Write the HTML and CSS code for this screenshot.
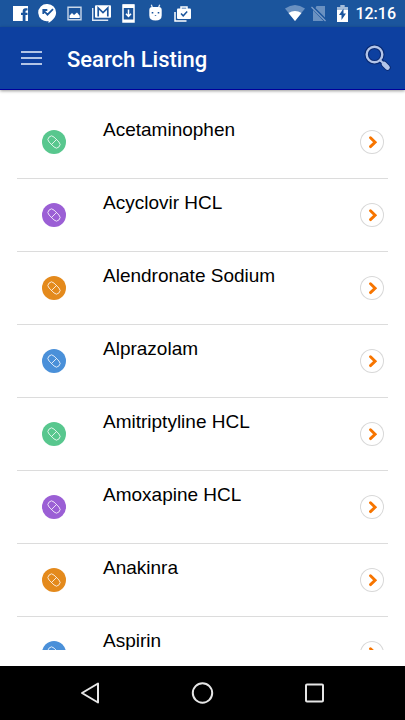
FILE: index.html
```html
<!DOCTYPE html>
<html lang="en">
<head>
<meta charset="utf-8">
<meta name="viewport" content="width=device-width, initial-scale=1">
<title>Search Listing</title>
<link rel="stylesheet" href="styles.css">
</head>
<body>
<svg class="symbols" aria-hidden="true">
  <symbol id="pill" viewBox="0 0 24 24">
    <g transform="rotate(45 12 12)" fill="none" stroke="currentColor" stroke-width=".9">
      <rect x="5" y="8.500" width="14" height="7" rx="3.500"/>
      <path d="M12 8.500v7"/>
    </g>
  </symbol>
  <symbol id="chevron" viewBox="0 0 24 24">
    <path d="M10.500 7.800l4.600 4.400-4.600 4.400" fill="none" stroke="currentColor" stroke-width="2.900" stroke-linecap="round" stroke-linejoin="miter"/>
  </symbol>
</svg>

<div class="status">
  <div class="notices" aria-hidden="true">
    <svg viewBox="0 0 27 27"><path fill="#fff" d="M6 6h15v15h-2.500v-6h2v-2.200h-2v-1.300q0-1 1-1h1V8.200h-2q-2.800 0-2.800 2.900v1.700h-1.700V15h1.700v6H6z"/></svg>
    <svg viewBox="0 0 27 27"><path fill="#fff" d="M13.500 4a8.600 8.600 0 0 1 8.600 8.600c0 4.500-3.600 8-7.600 10.400V21A8.600 8.600 0 1 1 13.500 4z"/><path d="M10 11l3.500 3.700 5.500-5.500M9.300 14v-4h4" fill="none" stroke="#1b559d" stroke-width="1.800"/></svg>
    <svg viewBox="0 0 27 27"><path d="M7 7.200h13v12.600H7z" fill="none" stroke="#c9d8ea" stroke-width="1.400"/><path fill="#fff" d="M8.500 18v-2.500l2.500-2.600 2 2 3-2.500 2.700 3.300V18z"/></svg>
    <svg viewBox="0 0 27 27"><path d="M4.700 8v12.300h15.500" fill="none" stroke="#dce6f2" stroke-width="1.400"/><rect x="7" y="5.200" width="16" height="12.600" rx="1" fill="#fff"/><path d="M10.200 16.500V8l4.800 4.500L19.800 8v8.500" fill="none" stroke="#1b559d" stroke-width="1.700"/></svg>
    <svg viewBox="0 0 27 27"><path d="M8 5h11v17H8z" fill="none" stroke="#fff" stroke-width="1.500"/><path fill="#fff" d="M8 4.500h11V8H8zM8 19.500h11V22H8z"/><path d="M13.500 9.500v6.500M11 13.800l2.500 2.700 2.500-2.700" fill="none" stroke="#fff" stroke-width="1.500"/></svg>
    <svg viewBox="0 0 27 27"><path d="M9.300 4.800l1.200 3M17.700 4.800l-1.200 3" stroke="#dce6f2" stroke-width="1.300"/><path fill="#fff" d="M7.300 10q0-3 3-3h6.400q3 0 3 3v5.500q0 5-6.200 5t-6.200-5z"/><path fill="#1b559d" d="M9.700 12h1.600v1.600H9.700zM15.700 12h1.600v1.600h-1.600zM12.800 15h1.400v.8h-1.400z"/></svg>
    <svg viewBox="0 0 27 27"><path d="M6 12v9h11.500" fill="none" stroke="#fff" stroke-width="1.500"/><path d="M12 9V7h6v2" fill="none" stroke="#fff" stroke-width="1.500"/><rect x="8" y="8.500" width="14" height="10.500" rx="1" fill="#fff"/><path d="M12 13.500l2.200 2.300 4-4.300" fill="none" stroke="#1b559d" stroke-width="1.500"/></svg>
  </div>
  <div class="system">
    <svg viewBox="0 0 24 27" aria-hidden="true"><path fill="#6a91c1" d="M2 8.500Q12 1.500 22 8.500L12 21z"/><path fill="#fff" d="M5.500 13q6.500-4 13 0L12 21z"/></svg>
    <svg viewBox="0 0 24 27" aria-hidden="true"><path fill="#6a91c1" d="M9.500 6H18v11.500L8.500 8zM6 10l10.500 11H6z"/><path d="M4.500 7l14 14" stroke="#7f9fc9" stroke-width="1.200"/></svg>
    <svg viewBox="0 0 24 27" aria-hidden="true"><path fill="#a5bdda" d="M6 7h3.300V5h4.400v2H17v4H6z"/><path fill="#fff" d="M6 10h11v12H6z"/><path fill="#1b559d" d="M12.500 8.500v5H15l-4.500 6.500v-5H8z"/></svg>
    <time>12:16</time>
  </div>
</div>

<header class="bar">
  <button class="menu" type="button" aria-label="Menu">
    <svg viewBox="0 0 22 16"><path d="M0 2h21M0 8h21M0 14h21" stroke="#b3c5e6" stroke-width="2"/></svg>
  </button>
  <h1>Search Listing</h1>
  <button class="search" type="button" aria-label="Search">
    <svg viewBox="0 0 28 28"><g fill="none" stroke-linecap="round"><g stroke="#092a72"><circle cx="10.500" cy="10.500" r="7.800" stroke-width="4.600"/><path d="M16.500 16.500l3 3" stroke-width="4"/><path d="M20 20l3.500 3.500" stroke-width="6.500"/></g><g stroke="#b3c5e9"><circle cx="10.500" cy="10.500" r="7.800" stroke-width="2.400"/><path d="M16.500 16.500l3 3" stroke-width="2"/><path d="M20 20l3.500 3.500" stroke-width="4.600"/></g></g></svg>
  </button>
</header>

<main>
  <ul class="list">
    <li><a href="#acetaminophen"><svg class="badge green"><use href="#pill"/></svg><span>Acetaminophen</span><svg class="go"><use href="#chevron"/></svg></a></li>
    <li><a href="#acyclovir"><svg class="badge purple"><use href="#pill"/></svg><span>Acyclovir HCL</span><svg class="go"><use href="#chevron"/></svg></a></li>
    <li><a href="#alendronate"><svg class="badge orange"><use href="#pill"/></svg><span>Alendronate Sodium</span><svg class="go"><use href="#chevron"/></svg></a></li>
    <li><a href="#alprazolam"><svg class="badge blue"><use href="#pill"/></svg><span>Alprazolam</span><svg class="go"><use href="#chevron"/></svg></a></li>
    <li><a href="#amitriptyline"><svg class="badge green"><use href="#pill"/></svg><span>Amitriptyline HCL</span><svg class="go"><use href="#chevron"/></svg></a></li>
    <li><a href="#amoxapine"><svg class="badge purple"><use href="#pill"/></svg><span>Amoxapine HCL</span><svg class="go"><use href="#chevron"/></svg></a></li>
    <li><a href="#anakinra"><svg class="badge orange"><use href="#pill"/></svg><span>Anakinra</span><svg class="go"><use href="#chevron"/></svg></a></li>
    <li><a href="#aspirin"><svg class="badge blue"><use href="#pill"/></svg><span>Aspirin</span><svg class="go"><use href="#chevron"/></svg></a></li>
  </ul>
</main>

<nav class="keys" aria-label="System">
  <button type="button" aria-label="Back"><svg viewBox="0 0 24 24"><path d="M19 2.500v19L3 12z"/></svg></button>
  <button type="button" aria-label="Home"><svg viewBox="0 0 24 24"><circle cx="11.500" cy="12" r="9.700"/></svg></button>
  <button type="button" aria-label="Recent apps"><svg viewBox="0 0 24 24"><rect x="3" y="3.500" width="17" height="17" rx="1"/></svg></button>
</nav>
</body>
</html>
```
FILE: styles.css
```css
* {
  box-sizing: border-box;
}

body {
  margin: 0;
  height: 100vh;
  display: flex;
  flex-direction: column;
  background: #fff;
  color: #000;
  font-family: "Liberation Sans", Arial, sans-serif;
}

button {
  display: flex;
  align-items: center;
  justify-content: center;
  padding: 0;
  border: 0;
  background: none;
}

svg {
  display: block;
  flex: none;
}

.symbols {
  position: absolute;
  width: 0;
  height: 0;
}

.status {
  flex: none;
  display: flex;
  justify-content: space-between;
  height: 27px;
  padding: 0 9px 0 7px;
  background: #1b559d;
}

.notices,
.system {
  display: flex;
  align-items: center;
}

.notices svg {
  width: 27px;
  height: 27px;
}

.system svg {
  width: 24px;
  height: 27px;
}

.status time {
  color: #fff;
  font: 500 16px/28px Roboto, sans-serif;
}

.bar {
  flex: none;
  display: flex;
  align-items: center;
  height: 63px;
  padding: 0 13px 0 21px;
  background: #0d40a0;
  border-bottom: 1px solid #00009a;
  box-shadow: 0 1px 3px rgba(0, 0, 0, 0.4);
}

.bar h1 {
  flex: 1;
  margin: 0 0 0 24px;
  padding-top: 3px;
  color: #fff;
  font: 500 22px/32px Roboto, sans-serif;
}

.menu svg {
  width: 22px;
  height: 16px;
}

.search svg {
  width: 28px;
  height: 28px;
}

main {
  flex: 1;
  min-height: 0;
  margin: 16px 17px;
  overflow: hidden;
}

.list {
  margin: 0;
  padding: 0;
  list-style: none;
}

.list a {
  display: flex;
  align-items: center;
  height: 73px;
  padding: 0 4px 0 25px;
  border-bottom: 1px solid #dcdcdc;
  color: inherit;
  text-decoration: none;
}

.list span {
  flex: 1;
  align-self: flex-start;
  margin: 12px 12px 0 37px;
  font-size: 19px;
  line-height: 24px;
}

.badge,
.go {
  width: 24px;
  height: 24px;
  border-radius: 50%;
}

.badge {
  color: rgba(255, 255, 255, 0.85);
}

.green {
  background: #58c78e;
}

.purple {
  background: #9b5fd5;
}

.orange {
  background: #e48a1c;
}

.blue {
  background: #4a90d9;
}

.go {
  color: #f77500;
  box-shadow: inset 0 0 0 1px #d8d8d8;
}

.keys {
  flex: none;
  display: flex;
  justify-content: center;
  height: 54px;
  background: #000;
}

.keys button {
  width: 112px;
}

.keys svg {
  width: 24px;
  height: 24px;
  fill: none;
  stroke: #e6e6e6;
  stroke-width: 2px;
  stroke-linejoin: round;
}
```
